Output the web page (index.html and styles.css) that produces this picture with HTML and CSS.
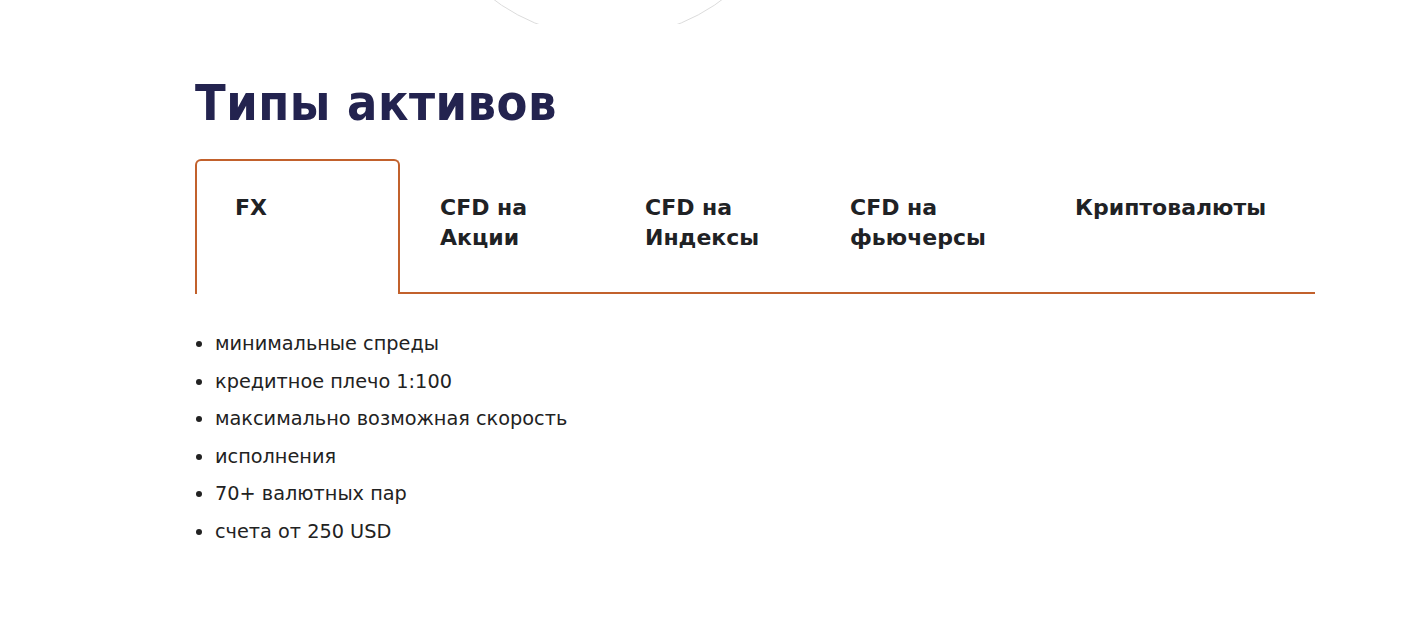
FILE: index.html
```html
<!DOCTYPE html>
<html lang="ru">
<head>
    <meta charset="UTF-8">
    <meta name="viewport" content="width=device-width, initial-scale=1.0">
    <title>Типы активов</title>
    <link rel="stylesheet" href="styles.css">
</head>
<body>
    <div class="top">
        <div class="circle"></div>
    </div>
    <section class="assets">
        <h2 class="assets-title">Типы активов</h2>
        <div class="tabs">
            <a class="tab active" href="#fx">FX</a>
            <a class="tab" href="#stocks">CFD на<br>Акции</a>
            <a class="tab" href="#indices">CFD на<br>Индексы</a>
            <a class="tab" href="#futures">CFD на<br>фьючерсы</a>
            <a class="tab" href="#crypto">Криптовалюты</a>
        </div>
        <ul class="features">
            <li>минимальные спреды</li>
            <li>кредитное плечо 1:100</li>
            <li>максимально возможная скорость</li>
            <li>исполнения</li>
            <li>70+ валютных пар</li>
            <li>счета от 250 USD</li>
        </ul>
    </section>
</body>
</html>
```

FILE: styles.css
```css
body {
    margin: 0;
    background: #fff;
    font-family: "DejaVu Sans", Verdana, sans-serif;
    color: #222;
}
.top {
    position: relative;
    height: 24px;
    overflow: hidden;
}
.circle {
    position: absolute;
    left: 416px;
    top: -346px;
    width: 382px;
    height: 382px;
    border: 1px solid #dcdcdc;
    border-radius: 50%;
}
.assets {
    width: 1120px;
    margin-left: 195px;
    padding-top: 50px;
}
.assets-title {
    margin: 0;
    font-family: "DejaVu Sans Condensed", "DejaVu Sans", sans-serif;
    font-stretch: condensed;
    font-size: 50px;
    line-height: 58px;
    letter-spacing: 0.5px;
    font-weight: bold;
    color: #23234f;
}
.tabs {
    display: flex;
    margin-top: 27px;
    border-bottom: 2px solid #c2612c;
}
.tab {
    width: 205px;
    box-sizing: border-box;
    padding: 32px 20px 39px 38px;
    font-size: 22px;
    line-height: 30px;
    font-weight: bold;
    color: #1f2225;
    text-decoration: none;
    border: 2px solid transparent;
    border-bottom: none;
    border-radius: 6px 6px 0 0;
}
.tab:nth-child(4) {
    width: 225px;
}
.tab:last-child {
    width: auto;
}
.tab.active {
    border-color: #c2612c;
    background: #fff;
    margin-bottom: -2px;
}
.features {
    margin: 31px 0 0;
    padding: 0 0 0 20px;
    font-size: 19.3px;
    line-height: 37.6px;
}
```
